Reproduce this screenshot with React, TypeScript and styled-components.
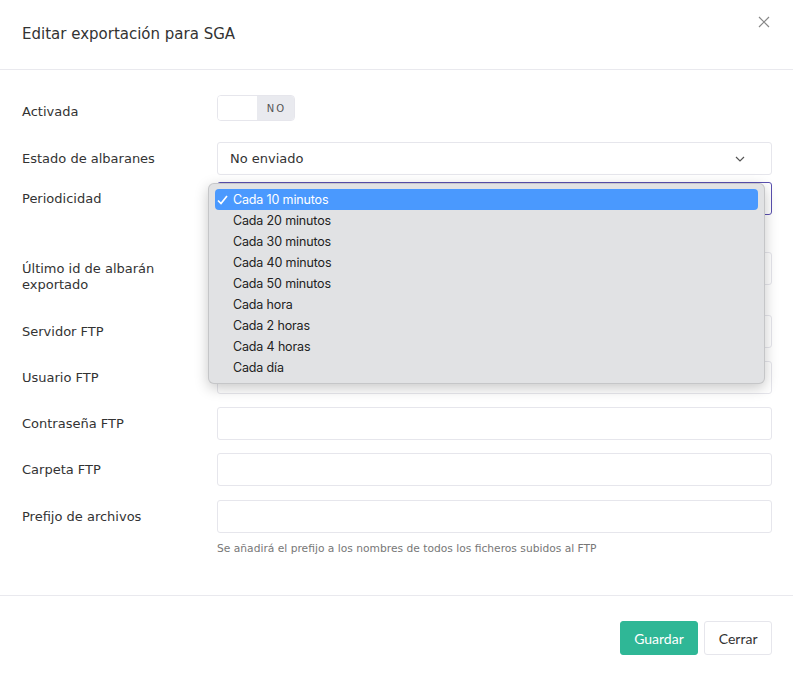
import styled, { createGlobalStyle } from 'styled-components';
import { ReactElement } from 'react';

const GlobalStyle = createGlobalStyle`
  html, body {
    margin: 0;
    padding: 0;
    background: #fff;
  }
  body {
    font-family: 'DejaVu Sans', Verdana, sans-serif;
    color: #333;
  }
  * {
    box-sizing: border-box;
  }
`;

const PERIODS = [
  'Cada 10 minutos',
  'Cada 20 minutos',
  'Cada 30 minutos',
  'Cada 40 minutos',
  'Cada 50 minutos',
  'Cada hora',
  'Cada 2 horas',
  'Cada 4 horas',
  'Cada día',
];

const Modal = styled.div`
  width: 793px;
  height: 677px;
  display: flex;
  flex-direction: column;
`;

const Header = styled.header`
  flex-shrink: 0;
  height: 70px;
  padding: 0 22px 2px;
  border-bottom: 1px solid #e9e9ee;
  display: flex;
  align-items: center;
  position: relative;
`;

const Title = styled.h1`
  margin: 0;
  font-size: 15px;
  font-weight: normal;
  color: #333;
`;

const CloseButton = styled.button`
  position: absolute;
  top: 16px;
  right: 23px;
  width: 12px;
  height: 12px;
  padding: 0;
  border: 0;
  background: none;
  display: flex;
  cursor: pointer;
`;

const Body = styled.div`
  padding: 25px 21px 40px 22px;
  display: flex;
  flex-direction: column;
`;

interface RowProps {
  gap?: number;
}

const Row = styled.div<RowProps>`
  display: grid;
  grid-template-columns: 195px 1fr;
  align-items: start;
  margin-bottom: ${(p) => (p.gap !== undefined ? p.gap : 13)}px;
`;

const Label = styled.label`
  font-size: 13px;
  line-height: 16px;
  color: #333;
  padding: 9px 0 8px;
`;

const Control = styled.div`
  position: relative;
  display: flex;
  flex-direction: column;
`;

const Toggle = styled.div`
  width: 78px;
  height: 26px;
  border: 1px solid #e6e6ec;
  border-radius: 4px;
  display: flex;
  overflow: hidden;
`;

const ToggleKnob = styled.span`
  width: 39px;
  background: #fff;
`;

const ToggleState = styled.span`
  flex: 1;
  background: #e9eaef;
  font-size: 10px;
  letter-spacing: 2px;
  color: #555;
  display: flex;
  align-items: center;
  justify-content: center;
  padding-left: 2px;
`;

interface FieldProps {
  focused?: boolean;
}

const Field = styled.div<FieldProps>`
  height: 33px;
  border: 1px solid ${(p) => (p.focused ? '#5a50b0' : '#e6e6ec')};
  border-radius: 3px;
  background: #fff;
  display: flex;
  align-items: center;
  justify-content: space-between;
  padding: 0 26px 0 12px;
  font-size: 13px;
  color: #333;
`;

const Help = styled.div`
  margin-top: 9px;
  font-size: 10.7px;
  color: #777;
`;

const Menu = styled.ul`
  position: absolute;
  top: 1px;
  left: -9px;
  width: 557px;
  margin: 0;
  padding: 5px 6px;
  list-style: none;
  background: #e1e2e4;
  border: 1px solid rgba(0, 0, 0, 0.12);
  border-radius: 6px;
  box-shadow: 0 4px 14px rgba(0, 0, 0, 0.22);
  font-family: Inter, 'Noto Sans', sans-serif;
  z-index: 5;
`;

interface OptionProps {
  active?: boolean;
}

const Option = styled.li<OptionProps>`
  height: 21px;
  display: flex;
  align-items: center;
  padding-left: 18px;
  position: relative;
  border-radius: 4px;
  font-size: 12.5px;
  letter-spacing: -0.15px;
  color: ${(p) => (p.active ? '#fff' : '#222')};
  background: ${(p) => (p.active ? '#4a99fe' : 'transparent')};
`;

const Check = styled.span`
  position: absolute;
  left: 2px;
  top: 0;
  height: 21px;
  display: flex;
  align-items: center;
`;

const Footer = styled.footer`
  flex-shrink: 0;
  margin-top: auto;
  height: 82px;
  border-top: 1px solid #e9e9ee;
  display: flex;
  align-items: flex-start;
  justify-content: flex-end;
  gap: 6px;
  padding: 25px 21px 0;
`;

interface ButtonProps {
  primary?: boolean;
}

const Button = styled.button<ButtonProps>`
  height: 34px;
  padding: 0 13.5px;
  border-radius: 3px;
  font-family: Lato, 'Noto Sans', sans-serif;
  font-size: 14px;
  cursor: pointer;
  border: 1px solid ${(p) => (p.primary ? '#2fb796' : '#e6e6ec')};
  background: ${(p) => (p.primary ? '#2fb796' : '#fff')};
  color: ${(p) => (p.primary ? '#fff' : '#333')};
`;

function Chevron() {
  return (
    <svg width="10" height="6" viewBox="0 0 10 6" fill="none">
      <path d="M1 1l4 4 4-4" stroke="#555" strokeWidth="1.2" />
    </svg>
  );
}

function CheckMark() {
  return (
    <svg width="11" height="10" viewBox="0 0 11 10" fill="none">
      <path d="M1 5.5l3 3L10 1" stroke="#fff" strokeWidth="1.7" />
    </svg>
  );
}

export default function App(): ReactElement {
  return (
    <>
      <GlobalStyle />
      <Modal>
        <Header>
          <Title>Editar exportación para SGA</Title>
          <CloseButton aria-label="Cerrar">
            <svg width="12" height="12" viewBox="0 0 12 12">
              <path d="M1 1l10 10M11 1L1 11" stroke="#888" strokeWidth="1.2" />
            </svg>
          </CloseButton>
        </Header>
        <Body>
          <Row gap={14}>
            <Label>Activada</Label>
            <Control>
              <Toggle>
                <ToggleKnob />
                <ToggleState>NO</ToggleState>
              </Toggle>
            </Control>
          </Row>
          <Row gap={7}>
            <Label>Estado de albaranes</Label>
            <Control>
              <Field>
                No enviado
                <Chevron />
              </Field>
            </Control>
          </Row>
          <Row gap={37}>
            <Label>Periodicidad</Label>
            <Control>
              <Field focused />
              <Menu>
                {PERIODS.map((p, i) => (
                  <Option key={p} active={i === 0}>
                    {i === 0 && (
                      <Check>
                        <CheckMark />
                      </Check>
                    )}
                    {p}
                  </Option>
                ))}
              </Menu>
            </Control>
          </Row>
          <Row gap={14}>
            <Label>
              Último id de albarán
              <br />
              exportado
            </Label>
            <Control>
              <Field />
            </Control>
          </Row>
          <Row>
            <Label>Servidor FTP</Label>
            <Control>
              <Field />
            </Control>
          </Row>
          <Row>
            <Label>Usuario FTP</Label>
            <Control>
              <Field />
            </Control>
          </Row>
          <Row>
            <Label>Contraseña FTP</Label>
            <Control>
              <Field />
            </Control>
          </Row>
          <Row gap={14}>
            <Label>Carpeta FTP</Label>
            <Control>
              <Field />
            </Control>
          </Row>
          <Row gap={0}>
            <Label>Prefijo de archivos</Label>
            <Control>
              <Field />
              <Help>
                Se añadirá el prefijo a los nombres de todos los ficheros subidos al FTP
              </Help>
            </Control>
          </Row>
        </Body>
        <Footer>
          <Button primary>Guardar</Button>
          <Button>Cerrar</Button>
        </Footer>
      </Modal>
    </>
  );
}
